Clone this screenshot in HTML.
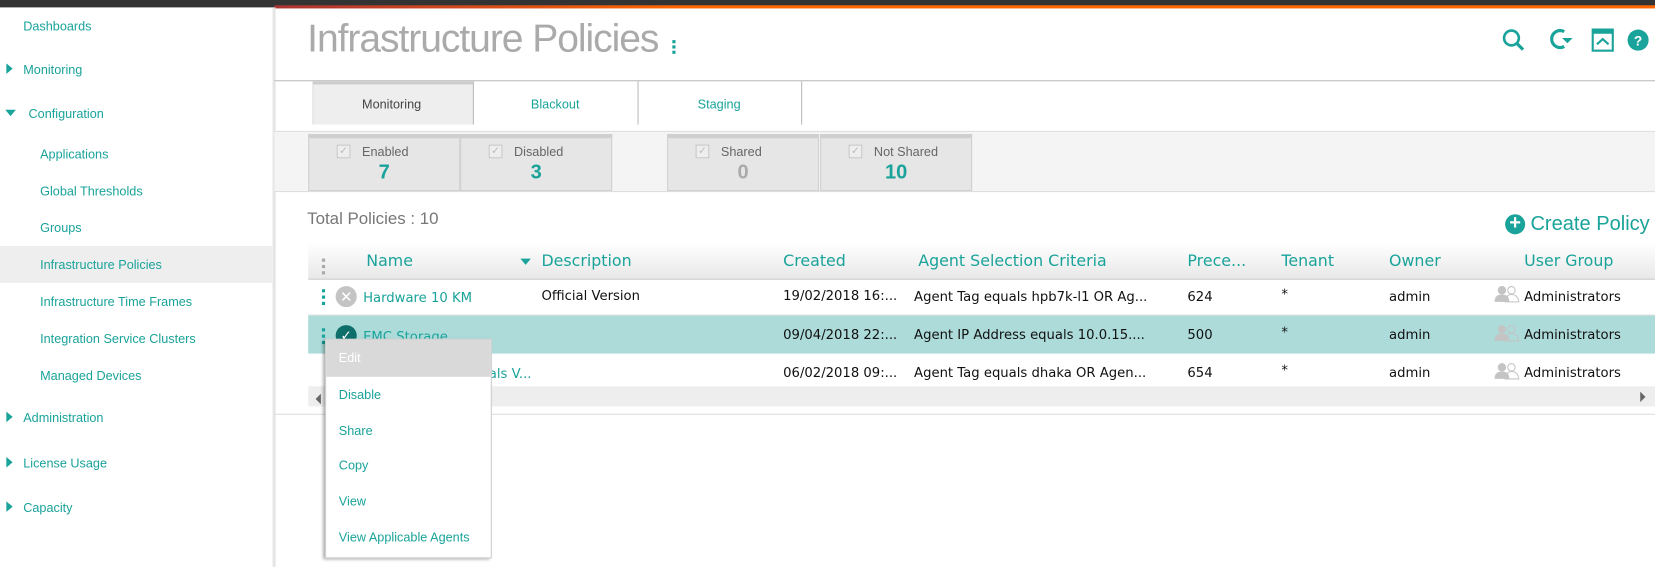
<!DOCTYPE html>
<html><head><meta charset="utf-8"><style>
*{margin:0;padding:0;box-sizing:border-box}
html,body{width:1655px;height:561px;overflow:hidden;background:#fff}
#w{position:absolute;left:0;top:0;width:1568px;height:532px;transform:scale(1.05548);transform-origin:0 0;font-family:"Liberation Sans",sans-serif;color:#1aa39a}
.a{position:absolute;white-space:nowrap}
.sb{font-size:12px;color:#1aa39a}
.t{font-family:"DejaVu Sans",sans-serif;font-size:12.5px;color:#111}
.h{font-family:"DejaVu Sans",sans-serif;font-size:15px;color:#1aa39a}
.stat{position:absolute;top:127px;height:54px;width:144px;background:#e6e6e6;border:1px solid #d0d0d0;border-top:4px solid #cfcfcf}
.stat .cb{position:absolute;left:26px;top:6px;width:13px;height:13px;border:1px solid #c8c8c8;background:#eee;font-size:10px;color:#bbb;line-height:11px;text-align:center}
.stat .l{position:absolute;left:50px;top:6px;font-size:12px;color:#666}
.stat .n{position:absolute;left:0;right:0;top:22px;text-align:center;font-size:19px;font-weight:bold;color:#1aa39a}
.mi{position:absolute;left:12px;font-size:12px;color:#1aa39a}
</style></head><body><div id="w">
<div class="a" style="left:0;top:0;width:1568px;height:7px;background:#333"></div>
<div class="a" style="left:260px;top:5px;width:1308px;height:3px;background:linear-gradient(90deg,#a33,#f60 30%,#f60)"></div>
<div class="a" style="left:258px;top:7px;width:3px;height:530px;background:linear-gradient(90deg,#eee,#ddd)"></div>
<div class="a" style="left:0;top:233px;width:258px;height:35px;background:#eee"></div>
<div class="a sb" style="left:22px;top:18px">Dashboards</div>
<div class="a" style="left:6px;top:60px;border-left:6px solid #1aa39a;border-top:5px solid transparent;border-bottom:5px solid transparent"></div>
<div class="a sb" style="left:22px;top:59px">Monitoring</div>
<div class="a" style="left:5px;top:104px;border-top:6px solid #1aa39a;border-left:5px solid transparent;border-right:5px solid transparent"></div>
<div class="a sb" style="left:27px;top:101px">Configuration</div>
<div class="a sb" style="left:38px;top:139px">Applications</div>
<div class="a sb" style="left:38px;top:174px">Global Thresholds</div>
<div class="a sb" style="left:38px;top:209px">Groups</div>
<div class="a sb" style="left:38px;top:244px">Infrastructure Policies</div>
<div class="a sb" style="left:38px;top:279px">Infrastructure Time Frames</div>
<div class="a sb" style="left:38px;top:314px">Integration Service Clusters</div>
<div class="a sb" style="left:38px;top:349px">Managed Devices</div>
<div class="a" style="left:6px;top:390px;border-left:6px solid #1aa39a;border-top:5px solid transparent;border-bottom:5px solid transparent"></div>
<div class="a sb" style="left:22px;top:389px">Administration</div>
<div class="a" style="left:6px;top:433px;border-left:6px solid #1aa39a;border-top:5px solid transparent;border-bottom:5px solid transparent"></div>
<div class="a sb" style="left:22px;top:432px">License Usage</div>
<div class="a" style="left:6px;top:475px;border-left:6px solid #1aa39a;border-top:5px solid transparent;border-bottom:5px solid transparent"></div>
<div class="a sb" style="left:22px;top:474px">Capacity</div>
<div class="a" style="left:291px;top:16px;font-size:37px;color:#aaa;letter-spacing:-1px">Infrastructure Policies</div>
<div class="a" style="left:637px;top:38px;width:3px;height:3px;background:#1aa39a;box-shadow:0 5px #1aa39a,0 10px #1aa39a"></div>
<svg class="a" style="left:1422px;top:25px" width="140" height="26" viewBox="0 0 140 26">
<circle cx="10" cy="11" r="7" fill="none" stroke="#1aa39a" stroke-width="2.5"/><line x1="15" y1="16" x2="21" y2="22" stroke="#1aa39a" stroke-width="3"/>
<path d="M60 5 A8 8 0 1 0 60 19" fill="none" stroke="#1aa39a" stroke-width="3"/><path d="M58 11 L68 11 L63 16 Z" fill="#1aa39a"/>
<rect x="87" y="3" width="19" height="20" fill="none" stroke="#1aa39a" stroke-width="2"/><rect x="87" y="3" width="19" height="4" fill="#1aa39a"/><path d="M91 17 L96.5 12 L102 17" fill="none" stroke="#1aa39a" stroke-width="2"/>
<circle cx="130" cy="13" r="10" fill="#1aa39a"/><text x="130" y="18" font-size="13" font-weight="bold" fill="#fff" text-anchor="middle" font-family="Liberation Sans">?</text>
</svg>
<div class="a" style="left:260px;top:76px;width:1308px;height:1px;background:#bbb"></div>
<div class="a" style="left:296px;top:77px;width:153px;height:41px;background:#eee;border-top:3px solid #ccc;border-right:1px solid #bbb;border-left:1px solid #ddd"></div>
<div class="a" style="left:604px;top:77px;width:1px;height:41px;background:#bbb"></div>
<div class="a" style="left:759px;top:77px;width:1px;height:41px;background:#bbb"></div>
<div class="a" style="left:343px;top:92px;font-size:12px;color:#444">Monitoring</div>
<div class="a" style="left:503px;top:92px;font-size:12px">Blackout</div>
<div class="a" style="left:661px;top:92px;font-size:12px">Staging</div>
<div class="a" style="left:260px;top:124px;width:1308px;height:1px;background:#ddd"></div>
<div class="a" style="left:260px;top:125px;width:1308px;height:56px;background:#f4f4f4"></div>
<div class="a" style="left:260px;top:181px;width:1308px;height:1px;background:#ddd"></div>
<div class="stat" style="left:292px"><div class="cb">✓</div><div class="l">Enabled</div><div class="n">7</div></div>
<div class="stat" style="left:436px"><div class="cb">✓</div><div class="l">Disabled</div><div class="n">3</div></div>
<div class="stat" style="left:632px"><div class="cb">✓</div><div class="l">Shared</div><div class="n" style="color:#aaa">0</div></div>
<div class="stat" style="left:777px"><div class="cb">✓</div><div class="l">Not Shared</div><div class="n">10</div></div>
<div class="a" style="left:291px;top:199px;font-size:16px;color:#777">Total Policies : 10</div>
<div class="a" style="left:1426px;top:203px;width:19px;height:19px;border-radius:50%;background:#1aa39a;color:#fff;font-size:19px;font-weight:bold;line-height:18px;text-align:center">+</div>
<div class="a" style="left:1450px;top:202px;font-size:19px">Create Policy</div>
<div class="a" style="left:292px;top:230px;width:1276px;height:35px;background:linear-gradient(#fff,#e8e8e8);border-bottom:1px solid #c8c8c8"></div>
<div class="a" style="left:305px;top:245px;width:3px;height:3px;background:#aaa;box-shadow:0 6px #aaa,0 12px #aaa"></div>
<div class="a h" style="left:347px;top:238px">Name</div>
<div class="a" style="left:493px;top:245px;border-top:6px solid #1aa39a;border-left:5px solid transparent;border-right:5px solid transparent"></div>
<div class="a h" style="left:513px;top:238px">Description</div>
<div class="a h" style="left:742px;top:238px">Created</div>
<div class="a h" style="left:870px;top:238px">Agent Selection Criteria</div>
<div class="a h" style="left:1125px;top:238px">Prece...</div>
<div class="a h" style="left:1214px;top:238px">Tenant</div>
<div class="a h" style="left:1316px;top:238px">Owner</div>
<div class="a h" style="left:1444px;top:238px">User Group</div>
<div class="a" style="left:292px;top:298px;width:1276px;height:1px;background:#ddd"></div>
<div class="a" style="left:292px;top:299px;width:1276px;height:36px;background:#acdbd9"></div>
<div class="a" style="left:292px;top:366px;width:1276px;height:19px;background:#eee"></div>
<div class="a" style="left:299px;top:373px;border-right:5px solid #666;border-top:5px solid transparent;border-bottom:5px solid transparent"></div>
<div class="a" style="left:1554px;top:371px;border-left:5px solid #666;border-top:5px solid transparent;border-bottom:5px solid transparent"></div>
<div class="a" style="left:260px;top:392px;width:1308px;height:1px;background:#ddd"></div>
<div class="a" style="left:305px;top:274px;width:3px;height:3px;background:#1aa39a;box-shadow:0 6px #1aa39a,0 12px #1aa39a"></div>
<div class="a" style="left:318px;top:271px;width:20px;height:20px;border-radius:50%;background:#c4c4c4;color:#fff;font-size:14px;line-height:20px;text-align:center">✕</div>
<div class="a t" style="left:344px;top:274px;color:#1aa39a">Hardware 10 KM</div>
<div class="a t" style="left:513px;top:272px">Official Version</div>
<div class="a t" style="left:742px;top:272px">19/02/2018 16:...</div>
<div class="a t" style="left:866px;top:273px">Agent Tag equals hpb7k-l1 OR Ag...</div>
<div class="a t" style="left:1125px;top:273px">624</div>
<div class="a t" style="left:1214px;top:271px">*</div>
<div class="a t" style="left:1316px;top:273px">admin</div>
<div class="a t" style="left:1444px;top:273px">Administrators</div>
<div class="a" style="left:305px;top:311px;width:3px;height:3px;background:#1aa39a;box-shadow:0 6px #1aa39a,0 12px #1aa39a"></div>
<div class="a" style="left:318px;top:308px;width:20px;height:20px;border-radius:50%;background:#0e6e6a;color:#fff;font-size:13px;line-height:20px;text-align:center">✓</div>
<div class="a t" style="left:344px;top:311px;color:#1aa39a">EMC Storage</div>
<div class="a t" style="left:742px;top:309px">09/04/2018 22:...</div>
<div class="a t" style="left:866px;top:309px">Agent IP Address equals 10.0.15....</div>
<div class="a t" style="left:1125px;top:309px">500</div>
<div class="a t" style="left:1214px;top:307px">*</div>
<div class="a t" style="left:1316px;top:309px">admin</div>
<div class="a t" style="left:1444px;top:309px">Administrators</div>
<div class="a t" style="left:370px;top:346px;color:#1aa39a">Hardware Globals V...</div>
<div class="a t" style="left:742px;top:345px">06/02/2018 09:...</div>
<div class="a t" style="left:866px;top:345px">Agent Tag equals dhaka OR Agen...</div>
<div class="a t" style="left:1125px;top:345px">654</div>
<div class="a t" style="left:1214px;top:343px">*</div>
<div class="a t" style="left:1316px;top:345px">admin</div>
<div class="a t" style="left:1444px;top:345px">Administrators</div>
<svg class="a" style="left:1415px;top:270px" width="26" height="90" viewBox="0 0 26 90">
<g fill="#c4c4c4"><circle cx="8" cy="5" r="4"/><path d="M1 16 Q1 9 8 9 Q15 9 15 16Z"/></g><g fill="none" stroke="#c4c4c4"><circle cx="17" cy="5" r="3.5"/><path d="M11 16 Q12 9 17 9 Q23 9 24 16Z"/></g>
<g transform="translate(0,37)"><g fill="#c4c4c4"><circle cx="8" cy="5" r="4"/><path d="M1 16 Q1 9 8 9 Q15 9 15 16Z"/></g><g fill="none" stroke="#c4c4c4"><circle cx="17" cy="5" r="3.5"/><path d="M11 16 Q12 9 17 9 Q23 9 24 16Z"/></g></g>
<g transform="translate(0,73)"><g fill="#c4c4c4"><circle cx="8" cy="5" r="4"/><path d="M1 16 Q1 9 8 9 Q15 9 15 16Z"/></g><g fill="none" stroke="#c4c4c4"><circle cx="17" cy="5" r="3.5"/><path d="M11 16 Q12 9 17 9 Q23 9 24 16Z"/></g></g>
</svg>
<div class="a" style="left:308px;top:321px;width:158px;height:208px;background:#fff;border:1px solid #ccc;box-shadow:-2px 1px 3px rgba(0,0,0,.35)">
<div style="position:absolute;left:0;top:0;width:156px;height:35px;background:#d9d9d9"></div>
<div class="mi" style="top:10px;color:#fff">Edit</div>
<div class="mi" style="top:45px">Disable</div>
<div class="mi" style="top:79px">Share</div>
<div class="mi" style="top:112px">Copy</div>
<div class="mi" style="top:146px">View</div>
<div class="mi" style="top:180px">View Applicable Agents</div>
</div>
</div></body></html>
